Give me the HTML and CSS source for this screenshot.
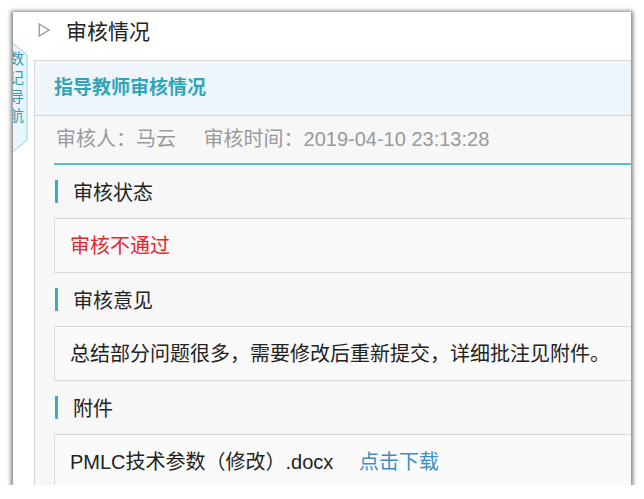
FILE: index.html
```html
<!DOCTYPE html>
<html lang="zh-CN">
<head>
    <meta charset="UTF-8">
    <title>审核情况</title>
    <link rel="stylesheet" href="styles.css">
</head>
<body>
    <div class="window">
        <div class="nav-tab">
            <svg class="nav-tab-shape" width="15" height="111" viewBox="0 0 15 111">
                <polygon points="-1,0.5 14,13 14,98 -1,110.5" fill="#eaf5fb" stroke="#93d0e0" stroke-width="1"/>
            </svg>
            <div class="nav-tab-text">数记导航</div>
        </div>

        <div class="main">
            <div class="page-head">
                <svg class="arrow" width="12" height="14" viewBox="0 0 12 14">
                    <polygon points="1.2,1 11,7 1.2,13" fill="none" stroke="#9a9a9a" stroke-width="1.4"/>
                </svg>
                <span class="page-title">审核情况</span>
            </div>

            <div class="panel">
                <div class="panel-head">指导教师审核情况</div>
                <div class="panel-body">
                    <div class="reviewer">
                        <span>审核人：马云</span>
                        <span class="review-time">审核时间：2019-04-10 23:13:28</span>
                    </div>

                    <div class="section-title">审核状态</div>
                    <div class="section-box status-fail">审核不通过</div>

                    <div class="section-title">审核意见</div>
                    <div class="section-box">总结部分问题很多，需要修改后重新提交，详细批注见附件。</div>

                    <div class="section-title">附件</div>
                    <div class="section-box">
                        PMLC技术参数（修改）.docx
                        <a class="download" href="#">点击下载</a>
                    </div>
                </div>
            </div>
        </div>
    </div>
</body>
</html>
```

FILE: styles.css
```css
body {
    margin: 0;
    background-color: #fff;
    font-family: "Liberation Sans", "Noto Sans CJK SC", sans-serif;
    color: #333;
}
.window {
    position: relative;
    margin: 12px 0 0 13px;
    width: 618px;
    height: 473px;
    overflow: hidden;
    background-color: #fff;
    box-shadow: 0 1px 4px 2px rgba(0, 0, 0, 0.5);
}
.nav-tab {
    position: absolute;
    left: 0;
    top: 30px;
    width: 15px;
    height: 111px;
    overflow: hidden;
    z-index: 2;
}
.nav-tab-shape {
    display: block;
}
.nav-tab-text {
    position: absolute;
    left: -4px;
    top: 7px;
    width: 15px;
    font-size: 15px;
    line-height: 19px;
    color: #2b9db4;
}
.main {
    margin-left: 21px;
}
.page-head {
    height: 36px;
    padding: 0 0 12px 4px;
    display: flex;
    align-items: center;
}
.arrow {
    margin-right: 16px;
}
.page-title {
    font-size: 21px;
    color: #222;
}
.panel {
    width: 640px;
    border: 1px solid #d6d6d6;
    border-bottom: none;
}
.panel-head {
    height: 54px;
    line-height: 54px;
    padding-left: 19px;
    background-color: #eef6fb;
    border-bottom: 1px solid #d2d6d8;
    color: #30a5ba;
    font-weight: bold;
    font-size: 19px;
}
.panel-body {
    background-color: #f7f7f7;
    padding-left: 19px;
    padding-bottom: 20px;
}
.reviewer {
    height: 47px;
    line-height: 47px;
    padding-left: 2px;
    border-bottom: 2px solid #5bbdc8;
    color: #9a9a9a;
    font-size: 20px;
}
.review-time {
    margin-left: 22px;
}
.section-title {
    height: 53px;
    display: flex;
    align-items: center;
    font-size: 20px;
    color: #222;
}
.section-title::before {
    content: "";
    width: 3px;
    height: 23px;
    margin: 0 15px 0 1px;
    background-color: #37acc2;
}
.section-box {
    height: 53px;
    line-height: 54px;
    padding-left: 15px;
    background-color: #fafafa;
    border: 1px solid #d9d9d9;
    font-size: 20px;
    color: #222;
}
.status-fail {
    color: #e8262b;
}
.download {
    margin-left: 20px;
    color: #3d8ec6;
    text-decoration: none;
}
```
